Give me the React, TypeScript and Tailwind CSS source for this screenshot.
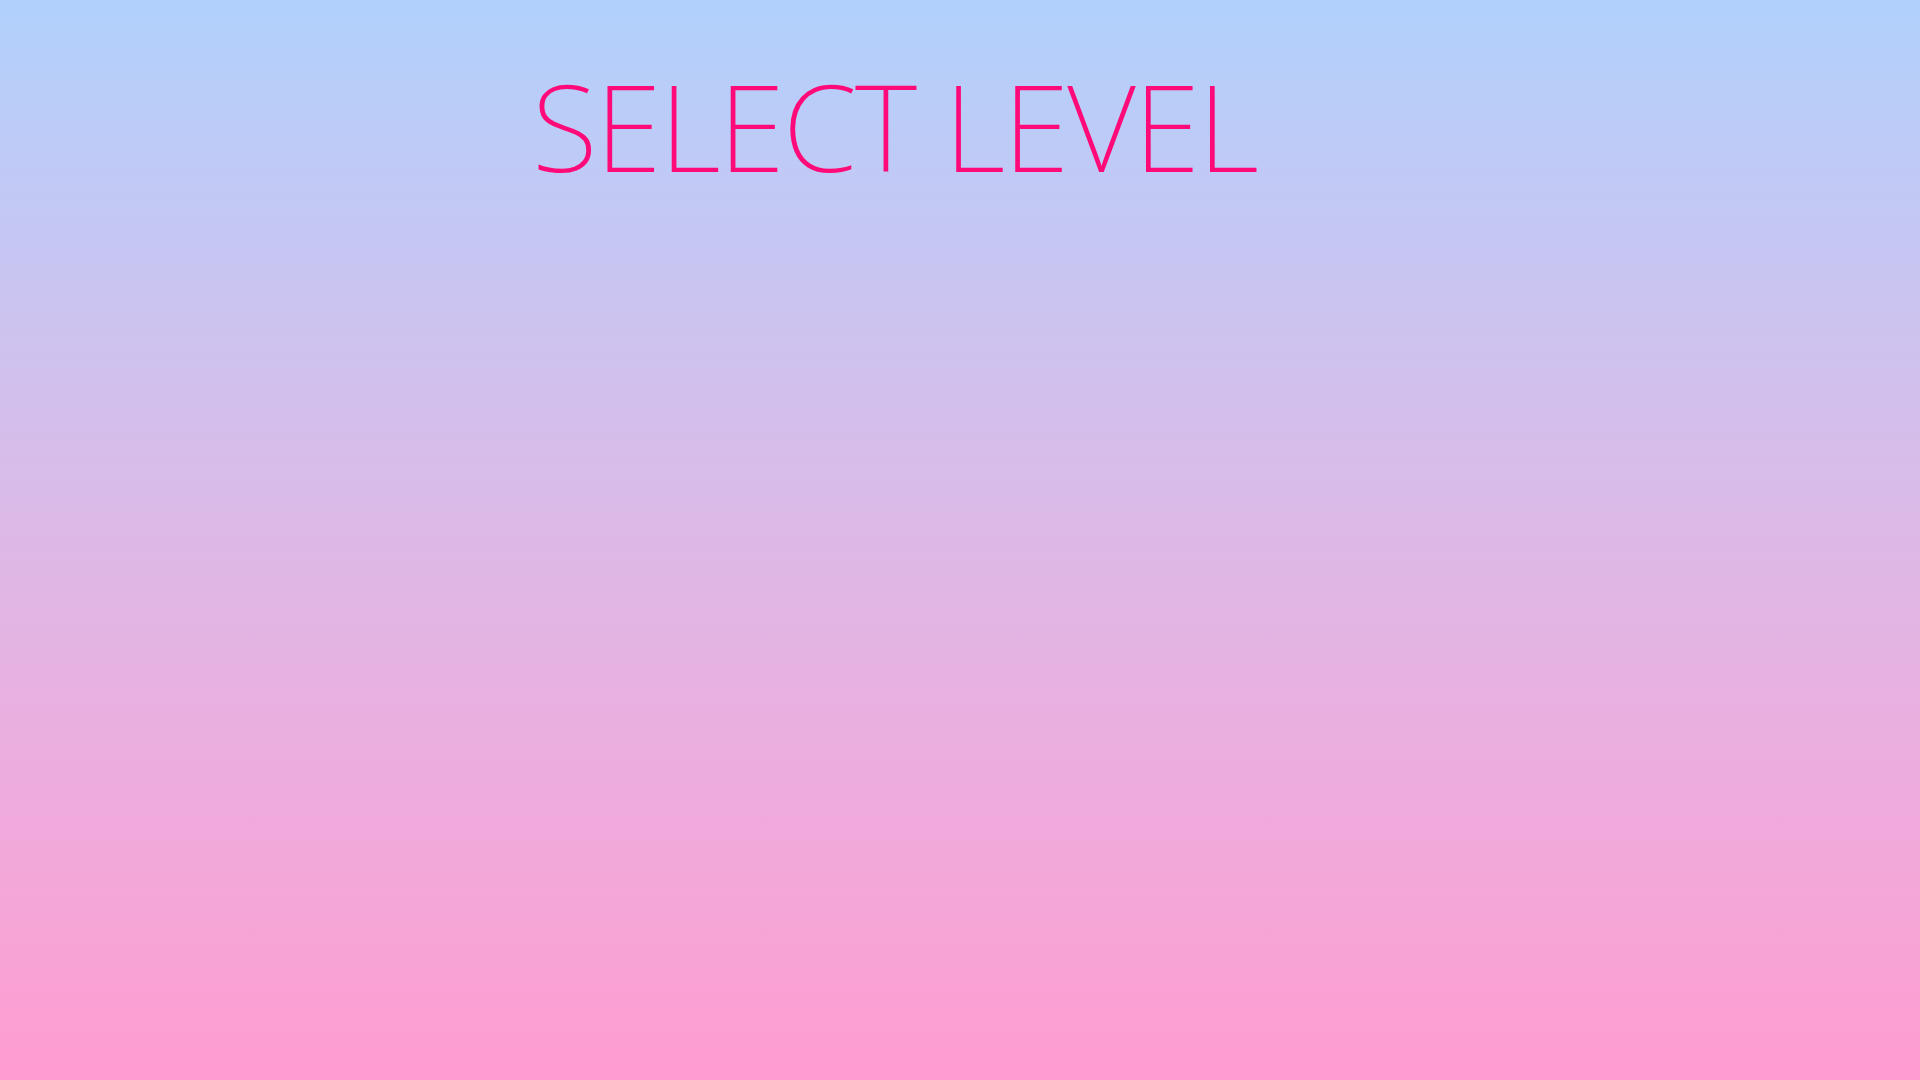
export default function App() {
  return (
    <div className="w-[1920px] h-[1080px] bg-gradient-to-b from-[#b0d1fc] to-[#ff9cd1] overflow-hidden">
      <div className="pl-[532px] pt-[66px]">
        <h1
          className="text-[#ff0a78] text-[120px] leading-[1] font-extralight tracking-[-2px]"
          style={{ fontFamily: '"Noto Sans", sans-serif' }}
        >
          SELECT LEVEL
        </h1>
      </div>
    </div>
  );
}
